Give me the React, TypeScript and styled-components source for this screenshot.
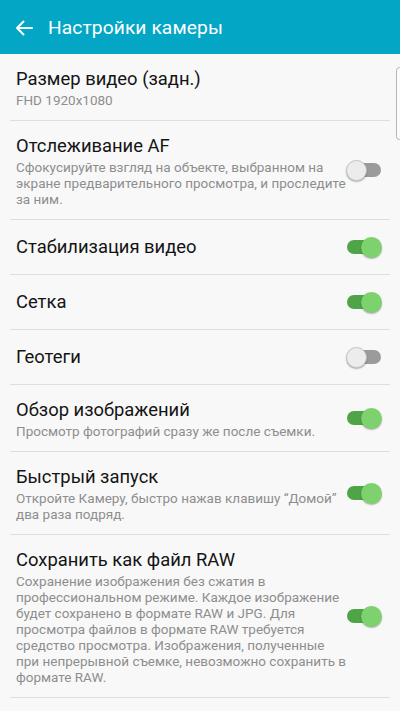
import styled, { createGlobalStyle } from "styled-components";

const GlobalStyle = createGlobalStyle`
    html, body {
        margin: 0;
        padding: 0;
        background: #f8f8f8;
        font-family: Roboto, "Noto Sans", "Liberation Sans", sans-serif;
    }
`;

// Data
interface Setting {
    title: string;
    lines?: string[];
    toggle?: boolean;
}

const settings: Setting[] = [
    { title: "Размер видео (задн.)", lines: ["FHD 1920x1080"] },
    {
        title: "Отслеживание AF",
        lines: [
            "Сфокусируйте взгляд на объекте, выбранном на",
            "экране предварительного просмотра, и проследите",
            "за ним.",
        ],
        toggle: false,
    },
    { title: "Стабилизация видео", toggle: true },
    { title: "Сетка", toggle: true },
    { title: "Геотеги", toggle: false },
    {
        title: "Обзор изображений",
        lines: ["Просмотр фотографий сразу же после съемки."],
        toggle: true,
    },
    {
        title: "Быстрый запуск",
        lines: [
            "Откройте Камеру, быстро нажав клавишу “Домой”",
            "два раза подряд.",
        ],
        toggle: true,
    },
    {
        title: "Сохранить как файл RAW",
        lines: [
            "Сохранение изображения без сжатия в",
            "профессиональном режиме. Каждое изображение",
            "будет сохранено в формате RAW и JPG. Для",
            "просмотра файлов в формате RAW требуется",
            "средство просмотра. Изображения, полученные",
            "при непрерывной съемке, невозможно сохранить в",
            "формате RAW.",
        ],
        toggle: true,
    },
];

// Styled Components
const Screen = styled.div`
    position: relative;
    width: 400px;
    height: 711px;
    overflow: hidden;
    background: #f8f8f8;
`;

const Toolbar = styled.header`
    height: 54px;
    background: #04a6c6;
    display: flex;
    align-items: center;
    padding: 0 0 0 15px;
    gap: 15px;
    color: #ffffff;
`;

const BackButton = styled.button`
    border: none;
    background: transparent;
    padding: 0;
    margin-top: 2px;
    display: flex;
    color: inherit;
`;

const Title = styled.h1`
    margin: 0;
    font-size: 19.2px;
    font-weight: 400;
    letter-spacing: 0.1px;
`;

const List = styled.ul`
    list-style: none;
    margin: 0;
    padding: 0;
`;

const Row = styled.li`
    display: flex;
    align-items: center;
    box-sizing: border-box;
    min-height: 54px;
    padding: 12px 18px 12px 16px;
    position: relative;

    &::after {
        content: "";
        position: absolute;
        left: 10px;
        right: 10px;
        bottom: -1px;
        height: 1px;
        background: #dedede;
    }

    & + & {
        margin-top: 1px;
    }
`;

const Texts = styled.div`
    flex: 1;
    min-width: 0;
`;

const RowTitle = styled.div`
    font-size: 18.4px;
    line-height: 26px;
    color: #141414;
`;

const Line = styled.div`
    font-size: 13.5px;
    line-height: 16px;
    color: #8e8e8e;
    white-space: nowrap;
`;

const Switch = styled.span<{ $on: boolean }>`
    position: relative;
    width: 36px;
    height: 21px;
    flex-shrink: 0;

    &::before {
        content: "";
        position: absolute;
        top: 3.5px;
        left: 1px;
        width: 34px;
        height: 14px;
        border-radius: 7px;
        background: ${(p) => (p.$on ? "#4fa447" : "#9b9b9b")};
    }

    &::after {
        content: "";
        position: absolute;
        top: 0;
        left: ${(p) => (p.$on ? "15px" : "0")};
        width: 21px;
        height: 21px;
        box-sizing: border-box;
        border-radius: 50%;
        background: ${(p) => (p.$on ? "#7dd26e" : "#ececec")};
        border: ${(p) => (p.$on ? "none" : "1px solid #c4c4c4")};
        box-shadow: 0 1px 1.5px rgba(0, 0, 0, 0.3);
    }
`;

const ScrollThumb = styled.div`
    position: absolute;
    top: 67px;
    right: -3px;
    width: 7px;
    height: 73px;
    box-sizing: border-box;
    border: 1px solid #b5b5b5;
    border-radius: 4px;
    background: #fbfbfb;
`;

const BackArrow = () => (
    <svg width="18" height="16" viewBox="0 0 18 16" fill="none">
        <path
            d="M17 8H2M8.5 1.5L2 8l6.5 6.5"
            stroke="currentColor"
            strokeWidth="2"
            strokeLinecap="round"
            strokeLinejoin="round"
        />
    </svg>
);

const App: React.FC = () => {
    return (
        <Screen>
            <GlobalStyle />
            <Toolbar>
                <BackButton aria-label="Назад">
                    <BackArrow />
                </BackButton>
                <Title>Настройки камеры</Title>
            </Toolbar>
            <List>
                {settings.map((s) => (
                    <Row key={s.title}>
                        <Texts>
                            <RowTitle>{s.title}</RowTitle>
                            {s.lines?.map((l) => (
                                <Line key={l}>{l}</Line>
                            ))}
                        </Texts>
                        {s.toggle !== undefined && <Switch $on={s.toggle} />}
                    </Row>
                ))}
            </List>
            <ScrollThumb />
        </Screen>
    );
};

export default App;
